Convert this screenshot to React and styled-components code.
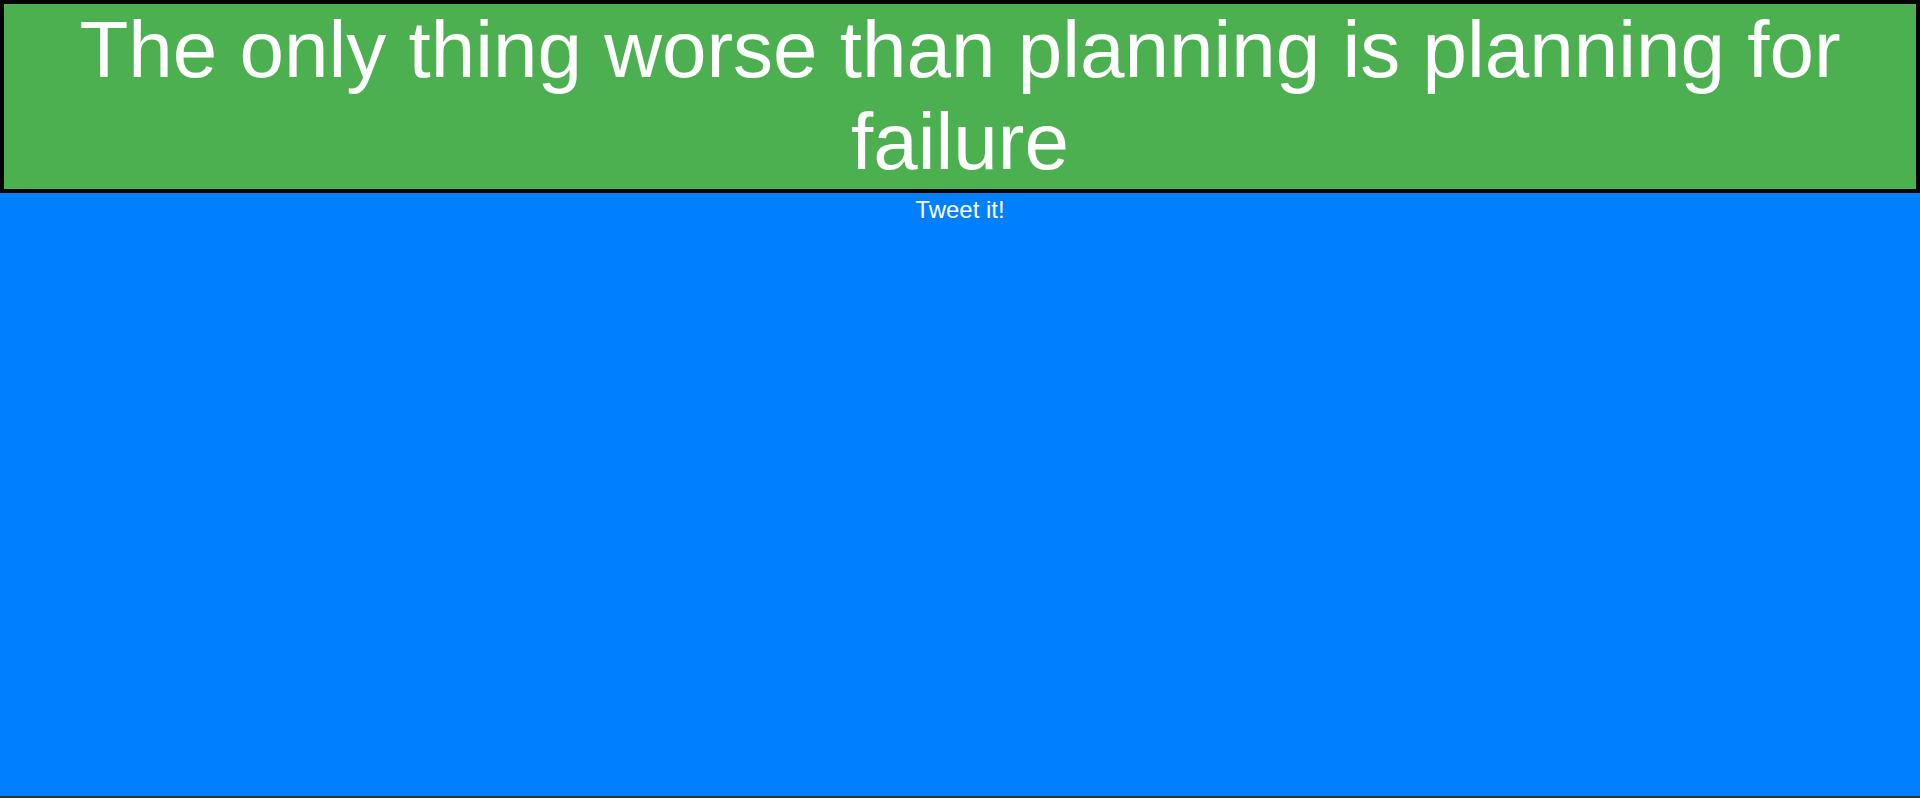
import styled, { createGlobalStyle } from "styled-components";

const GlobalStyle = createGlobalStyle`
  html, body {
    margin: 0;
    padding: 0;
    background-color: #333333;
    font-family: "Liberation Sans", Arial, sans-serif;
  }
`;

const Page = styled.div`
  height: 796px;
  background-color: #007fff;
  text-align: center;
`;

const QuoteBox = styled.div`
  background-color: #4caf50;
  border: 4px solid #000;
  padding-bottom: 1px;
`;

const Quote = styled.h1`
  margin: 0;
  font-size: 80px;
  font-weight: normal;
  line-height: 92px;
  color: #fff;
`;

const TweetLink = styled.a`
  display: inline-block;
  padding-top: 3px;
  font-size: 24px;
  line-height: 28px;
  color: #fff;
  text-decoration: none;
  cursor: pointer;
`;

export default function App() {
  return (
    <>
      <GlobalStyle />
      <Page>
        <QuoteBox>
          <Quote>The only thing worse than planning is planning for failure</Quote>
        </QuoteBox>
        <TweetLink>Tweet it!</TweetLink>
      </Page>
    </>
  );
}
